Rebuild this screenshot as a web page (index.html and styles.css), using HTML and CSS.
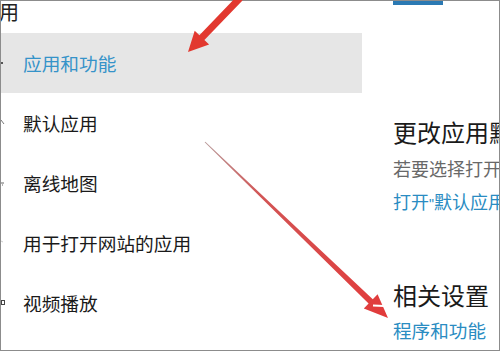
FILE: index.html
```html
<!DOCTYPE html>
<html lang="zh-CN">
<head>
<meta charset="utf-8">
<title>应用和功能</title>
<link rel="stylesheet" href="styles.css">
</head>
<body>
<div class="frame">
  <nav class="nav">
    <div class="nav-title">应用</div>
    <div class="nav-item active">
      <svg class="frag" width="5" height="16" viewBox="0 0 5 16"><rect x="0" y="7" width="2" height="2" fill="#555"/></svg>
      <span class="label">应用和功能</span>
    </div>
    <div class="nav-item">
      <svg class="frag" width="5" height="16" viewBox="0 0 5 16"><path d="M0 5 L3 9" stroke="#777" stroke-width="1" fill="none"/></svg>
      <span class="label">默认应用</span>
    </div>
    <div class="nav-item">
      <svg class="frag" width="5" height="16" viewBox="0 0 5 16"><path d="M0 8 H3 M1 10 H2" stroke="#666" stroke-width="1" fill="none"/></svg>
      <span class="label">离线地图</span>
    </div>
    <div class="nav-item">
      <svg class="frag" width="5" height="16" viewBox="0 0 5 16"><path d="M0 6 L2 7" stroke="#ccc" stroke-width="1" fill="none"/></svg>
      <span class="label">用于打开网站的应用</span>
    </div>
    <div class="nav-item">
      <svg class="frag" width="5" height="16" viewBox="0 0 5 16"><rect x="0.5" y="5.5" width="3" height="4" stroke="#444" stroke-width="1" fill="none"/></svg>
      <span class="label">视频播放</span>
    </div>
  </nav>
  <main class="main">
    <div class="btn-edge"></div>
    <h2 class="heading first">更改应用默认设置</h2>
    <p class="desc">若要选择打开文件的默认应用</p>
    <a class="link first-link">打开<span class="q">"</span>默认应用<span class="q">"</span>设置</a>
    <h2 class="heading second">相关设置</h2>
    <a class="link last-link">程序和功能</a>
  </main>
</div>
<svg class="arrows" width="502" height="352" viewBox="0 0 502 352">
  <defs>
    <linearGradient id="g2" gradientUnits="userSpaceOnUse" x1="205" y1="142" x2="388" y2="318">
      <stop offset="0" stop-color="#b89a9a"/>
      <stop offset="0.3" stop-color="#d25555"/>
      <stop offset="1" stop-color="#e23a3a"/>
    </linearGradient>
  </defs>
  <polygon points="237.5,-4.4 242.5,0.4 204.4,40 209.1,44.5 188,52 194.7,30.7 199.4,35.2" fill="#e2382f"/>
  <polygon points="204.65,142.36 368.6,303.6 363.8,308.6 388,318 377.6,294.2 372.8,299.2 205.35,141.64" fill="url(#g2)"/>
  <path d="M373 305.5 L384 306" stroke="#ffffff" stroke-width="2"/>
</svg>
</body>
</html>
```

FILE: styles.css
```css
html, body {
  margin: 0;
  padding: 0;
  background: #ffffff;
}
body {
  width: 502px;
  height: 352px;
  overflow: hidden;
  position: relative;
  font-family: "Noto Sans CJK SC", "Noto Sans", sans-serif;
}
.frame {
  width: 498px;
  height: 349px;
  border: 1px solid #8c8c8c;
  overflow: hidden;
  display: flex;
  background: #ffffff;
}
.nav {
  width: 361px;
  flex-shrink: 0;
  display: flex;
  flex-direction: column;
}
.nav-title {
  height: 32px;
  line-height: 22px;
  font-size: 20px;
  color: #222222;
  margin-left: -22px;
  white-space: nowrap;
}
.nav-item {
  height: 60px;
  display: flex;
  align-items: center;
  color: #1a1a1a;
  font-size: 18.7px;
}
.nav-item.active {
  background: #e6e6e6;
  color: #3593c9;
}
.frag {
  flex-shrink: 0;
  display: block;
}
.label {
  margin-left: 17px;
  white-space: nowrap;
  line-height: 24px;
}
.main {
  flex: 1;
  min-width: 0;
  padding-left: 31px;
  white-space: nowrap;
  display: flex;
  flex-direction: column;
  align-items: flex-start;
}
.btn-edge {
  width: 50px;
  height: 4px;
  background: #2b79b3;
}
.heading {
  margin: 0;
  font-size: 24px;
  line-height: 32px;
  font-weight: 400;
  color: #1a1a1a;
}
.heading.first {
  margin-top: 111px;
}
.heading.second {
  margin-top: 62px;
}
.desc {
  margin: 7px 0 0 0;
  font-size: 18px;
  line-height: 26px;
  color: #686868;
}
.link {
  font-size: 18px;
  line-height: 26px;
  color: #2a8cc2;
}
.q {
  font-family: "Liberation Sans", sans-serif;
  font-size: 14px;
}
.first-link {
  margin-top: 7px;
}
.last-link {
  margin-top: 6px;
  font-size: 18.6px;
}
.arrows {
  position: absolute;
  left: 0;
  top: 0;
  pointer-events: none;
}
```
